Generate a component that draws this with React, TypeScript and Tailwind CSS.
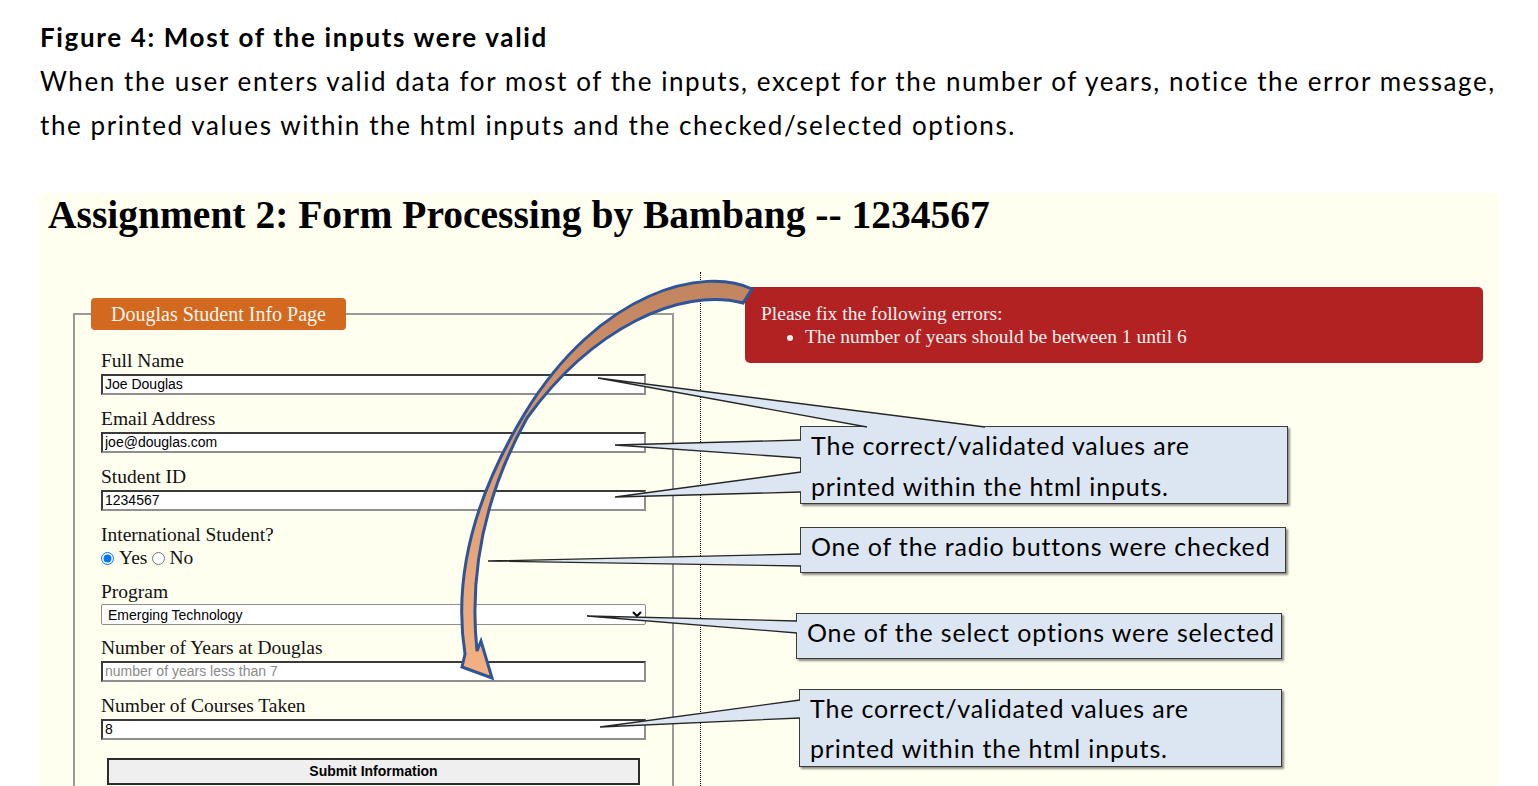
import React from "react";

const serif = "font-['Liberation_Serif','Times_New_Roman',serif]";
const arial = "font-['Liberation_Sans',Arial,sans-serif]";
const calibri = "font-['Lato','Noto_Sans',sans-serif]";

type FieldProps = { label: string; value?: string; placeholder?: string };

// Text input as the browser draws it: inset 2px border
const Field = ({ label, value, placeholder }: FieldProps) => (
  <div className="mb-[13px]">
    <label className="block h-[22px] leading-[22px] text-[19.5px] text-[#111]">{label}</label>
    <input
      readOnly
      defaultValue={value}
      placeholder={placeholder}
      className={`${arial} mt-[2px] block h-[21px] w-full border-2 border-t-[#3a3a3a] border-l-[#3a3a3a] border-b-[#8f8f8f] border-r-[#8f8f8f] bg-white px-[2px] text-[14px] text-black placeholder:text-[#8a8a8a] outline-none`}
    />
  </div>
);

// Note box with a dark outline and a soft drop shadow
const Note = ({ className, children }: { className: string; children: React.ReactNode }) => (
  <div
    className={`${calibri} absolute border border-[#3a3a3a] bg-[#dce6f2] pl-[10px] text-[25px] tracking-[0.85px] text-black shadow-[2px_2px_2px_rgba(0,0,0,0.45)] ${className}`}
  >
    <div className="-mt-[2px] whitespace-nowrap">{children}</div>
  </div>
);

// pointer tails of the notes: tip, then the two points on the box edge
const tails: [number, number, number, number, number, number][] = [
  [598, 378, 867, 427, 985, 427],
  [615, 445, 801, 440, 801, 458],
  [615, 497, 801, 472, 801, 492],
  [488, 561, 801, 554, 801, 566],
  [587, 616, 797, 621, 797, 633],
  [600, 727, 800, 700, 800, 718],
];

const Overlay = () => (
  <svg className="pointer-events-none absolute left-0 top-0" width="1538" height="786" viewBox="0 0 1538 786">
    <defs>
      <linearGradient id="band" x1="0" y1="280" x2="0" y2="680" gradientUnits="userSpaceOnUse">
        <stop offset="0" stopColor="#c0845f" />
        <stop offset="0.45" stopColor="#dc9c74" />
        <stop offset="1" stopColor="#f4b183" />
      </linearGradient>
    </defs>
    {tails.map(([tx, ty, ax, ay, bx, by], i) => (
      <g key={i}>
        <polygon points={`${tx},${ty} ${ax},${ay} ${bx},${by}`} fill="#dce6f2" />
        <polyline points={`${ax},${ay} ${tx},${ty} ${bx},${by}`} fill="none" stroke="#262626" strokeWidth="1.3" />
      </g>
    ))}
    {/* curved arrow from the error box down to the years input, twisting thin around the middle */}
    <path
      d="M752 289 C705 266 600 290 525 413 C474 497 453 578 465 654 L462 667 L492 678 L481 641 L477 651 C470 584 479 505 527 418 C592 328 680 287 743 303 Z"
      fill="url(#band)"
      stroke="#2f5597"
      strokeWidth="3"
      strokeLinejoin="miter"
    />
  </svg>
);

export default function App() {
  return (
    <div className="relative h-[786px] w-[1538px] overflow-hidden bg-white">
      <div className={`${calibri} whitespace-nowrap pl-[40px] pt-[15px] text-[26px] leading-[44px] text-black`}>
        <p className="font-bold tracking-[1.65px]">Figure 4: Most of the inputs were valid</p>
        <p className="tracking-[1.58px]">
          When the user enters valid data for most of the inputs, except for the number of years, notice the error message,
          <br />
          the printed values within the html inputs and the checked/selected options.
        </p>
      </div>

      <div className={`${serif} ml-[39px] mt-[46px] h-[600px] w-[1459px] bg-[#fffff0] pt-[3px]`}>
        <h1 className="pl-[9px] text-[39.5px] font-bold leading-[39px] text-black">
          Assignment 2: Form Processing by Bambang -- 1234567
        </h1>

        <div className="mt-[37px] flex">
          <div className="w-[661px] shrink-0 pl-[34px]">
            <fieldset className="mt-[26px] w-[599px] border-2 border-[#9a9a9a] px-[26px] pb-[40px] pt-[20px]">
              <legend className="-ml-[10px] h-[32px] rounded-[4px] bg-[#d2691e] px-[20px] text-[20px] leading-[32px] text-[#fdf5ee]">
                Douglas Student Info Page
              </legend>
              <Field label="Full Name" value="Joe Douglas" />
              <Field label="Email Address" value="joe@douglas.com" />
              <Field label="Student ID" value="1234567" />

              <div className="mb-[13px]">
                <div className="h-[22px] text-[19.5px] leading-[22px] text-[#111]">International Student?</div>
                <div className="mt-[2px] flex h-[20px] items-center text-[19.5px] text-[#111]">
                  <input type="radio" name="intl" defaultChecked className="m-0 mr-[5px] h-[13px] w-[13px]" />
                  <span>Yes</span>
                  <input type="radio" name="intl" className="m-0 ml-[5px] mr-[4px] h-[13px] w-[13px]" />
                  <span>No</span>
                </div>
              </div>

              <div className="mb-[12px]">
                <label className="block h-[22px] text-[19.5px] leading-[22px] text-[#111]">Program</label>
                <select
                  defaultValue="et"
                  className={`${arial} mt-[1px] block h-[21px] w-full rounded-[2px] border border-[#8f8f8f] bg-white pl-[2px] text-[14px] text-black`}
                >
                  <option value="et">Emerging Technology</option>
                  <option value="cs">Computing Science</option>
                </select>
              </div>

              <Field label="Number of Years at Douglas" placeholder="number of years less than 7" />
              <Field label="Number of Courses Taken" value="8" />

              <button
                type="button"
                className={`${arial} mx-[6px] mt-[5px] h-[27px] w-[533px] border-2 border-[#2b2b2b] bg-[#efefef] text-[14px] font-bold text-black`}
              >
                Submit Information
              </button>
            </fieldset>
          </div>

          <div className="h-[600px] flex-1 border-l border-dotted border-black">
            <div className="ml-[44px] mr-[15px] mt-[15px] rounded-[5px] bg-[#b22222] px-[16px] py-[15px] text-[19.5px] leading-[23px] text-[#fdf0f0]">
              <p>Please fix the following errors:</p>
              <ul className="list-disc pl-[44px]">
                <li>The number of years should be between 1 until 6</li>
              </ul>
            </div>
          </div>
        </div>
      </div>

      <Note className="left-[800px] top-[426px] h-[78px] w-[488px] leading-[41px]">
        The correct/validated values are
        <br />
        printed within the html inputs.
      </Note>
      <Note className="left-[800px] top-[527px] h-[46px] w-[486px] leading-[41px]">
        One of the radio buttons were checked
      </Note>
      <Note className="left-[796px] top-[613px] h-[46px] w-[486px] leading-[41px]">
        One of the select options were selected
      </Note>
      <Note className="left-[799px] top-[689px] h-[78px] w-[483px] leading-[40px]">
        The correct/validated values are
        <br />
        printed within the html inputs.
      </Note>

      <Overlay />
    </div>
  );
}
